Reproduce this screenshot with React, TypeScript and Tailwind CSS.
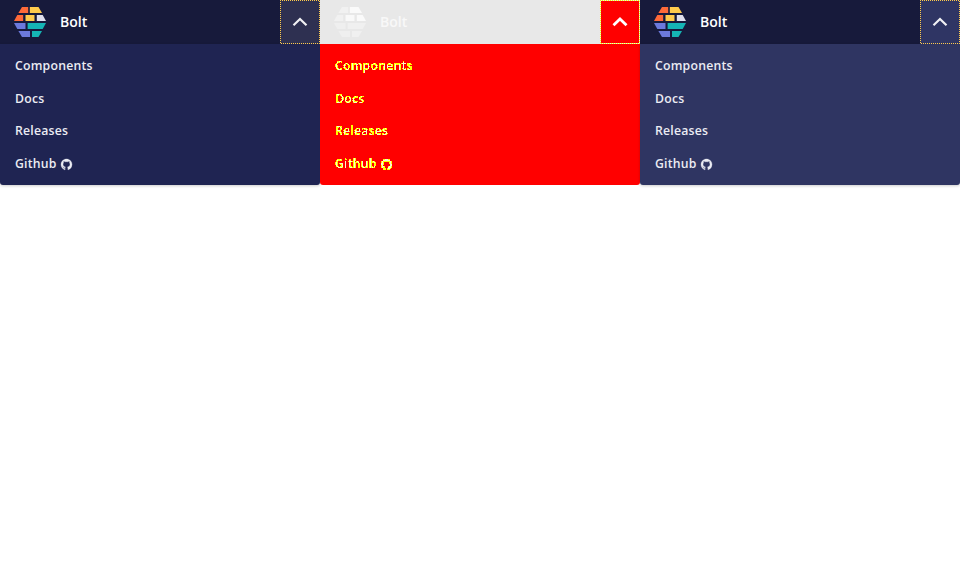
import React from "react";

type Variant = "base" | "diff" | "next";

const font = "font-['Open_Sans',sans-serif]";

function Logo({ faded }: { faded?: boolean }) {
  const c = faded
    ? ["#f1f1f1", "#fafafa", "#f1f1f1", "#f9f9f9", "#fafafa", "#efefef", "#f0f0f0", "#efefef", "#f0f0f0"]
    : ["#ff6a39", "#ffcb4d", "#ff6a39", "#ffcb4d", "#e0e0ee", "#6c79dc", "#15b5b5", "#6c79dc", "#15b5b5"];
  return (
    <svg width="32" height="30" viewBox="0 0 32 30" className="shrink-0">
      <path fill={c[0]} d="M8 0H14.2V6H4.4Z" />
      <path fill={c[1]} d="M15.8 0H24.5L28 6H15.8Z" />
      <path fill={c[2]} d="M3.3 8H9.2V14H0Z" />
      <path fill={c[3]} d="M11.5 8H20.5V14H11.5Z" />
      <path fill={c[4]} d="M22.8 8H28.7L32 14H22.8Z" />
      <path fill={c[5]} d="M0 16H11.5V22H3.3Z" />
      <path fill={c[6]} d="M13.6 16H32L28.7 22H13.6Z" />
      <path fill={c[7]} d="M4.4 24H16V30H8Z" />
      <path fill={c[8]} d="M18 24H28L24.5 30H18Z" />
    </svg>
  );
}

function Github() {
  return (
    <svg width="11" height="11" viewBox="0 0 16 16" fill="currentColor" stroke="currentColor" strokeWidth="0.5" className="shrink-0 overflow-visible">
      <path d="M8 0C3.58 0 0 3.58 0 8c0 3.54 2.29 6.53 5.47 7.59.4.07.55-.17.55-.38 0-.19-.01-.82-.01-1.49-2.01.37-2.53-.49-2.69-.94-.09-.23-.48-.94-.82-1.13-.28-.15-.68-.52-.01-.53.63-.01 1.08.58 1.23.82.72 1.21 1.87.87 2.33.66.07-.52.28-.87.51-1.07-1.78-.2-3.64-.89-3.64-3.95 0-.87.31-1.59.82-2.15-.08-.2-.36-1.02.08-2.12 0 0 .67-.21 2.2.82.64-.18 1.32-.27 2-.27s1.36.09 2 .27c1.53-1.04 2.2-.82 2.2-.82.44 1.1.16 1.92.08 2.12.51.56.82 1.27.82 2.15 0 3.07-1.87 3.75-3.65 3.95.29.25.54.73.54 1.48 0 1.07-.01 1.93-.01 2.2 0 .21.15.46.55.38A8.01 8.01 0 0 0 16 8c0-4.42-3.58-8-8-8Z" />
    </svg>
  );
}

// Marks glyph edges in hard yellow pixels and glyph cores in a pale tint.
function EdgeFilter() {
  return (
    <svg width="0" height="0" className="absolute">
      <filter id="edges" x="-5%" y="-5%" width="110%" height="110%" colorInterpolationFilters="sRGB">
        <feComponentTransfer in="SourceAlpha" result="edgeMask">
          <feFuncA type="discrete" tableValues="0 0 1 1 0 1 1 1 1 1" />
        </feComponentTransfer>
        <feFlood floodColor="#ffff00" />
        <feComposite in2="edgeMask" operator="in" result="edge" />
        <feComponentTransfer in="SourceAlpha" result="coreMask">
          <feFuncA type="discrete" tableValues="0 0 0 0 0 0 0 0 0 1" />
        </feComponentTransfer>
        <feFlood floodColor="#fbf5d0" />
        <feComposite in2="coreMask" operator="in" result="core" />
        <feMerge>
          <feMergeNode in="edge" />
          <feMergeNode in="core" />
        </feMerge>
      </filter>
    </svg>
  );
}

const links = ["Components", "Docs", "Releases", "Github"];

const styles = {
  base: {
    bar: "bg-[#171a3b] text-white",
    button: "bg-[#2e3051]",
    menu: "bg-[#1f2452] text-[#ebecf3] shadow-[0_1px_3px_rgba(0,0,0,0.2)]",
    dot: "#ffcb4d",
    gap: "#2e3051",
  },
  diff: {
    bar: "bg-[#e8e8e8] text-[#f8f8f8]",
    button: "bg-[#ff0000]",
    menu: "bg-[#ff0000] text-[#ffff00]",
    dot: "#ffff00",
    gap: "#e8e8e8",
  },
  next: {
    bar: "bg-[#171a3b] text-white",
    button: "bg-[#2f3564]",
    menu: "bg-[#2f3562] text-[#ebecf3] shadow-[0_1px_3px_rgba(0,0,0,0.2)]",
    dot: "#ffcb4d",
    gap: "#2f3564",
  },
};

function Panel({ variant }: { variant: Variant }) {
  const s = styles[variant];
  const diff = variant === "diff";
  return (
    <section className="w-80">
      <header className={`flex h-11 items-center pl-3.5 ${s.bar}`}>
        <Logo faded={diff} />
        <span className="ml-3.5 flex-1 text-[14px] leading-5 font-semibold">Bolt</span>
        <button className={`flex h-11 w-10 items-center justify-center ${s.button}`}>
          <svg width="40" height="44" viewBox="0 0 40 44" fill="none">
            <path d="M.5 .5H39.5V43.5H.5Z" stroke={s.gap} shapeRendering="crispEdges" />
            <path
              d="M.5 .5H39.5V43.5H.5Z"
              stroke={s.dot}
              strokeDasharray="1 1"
              strokeDashoffset=".5"
              shapeRendering="crispEdges"
            />
            <path d="M13.5 25.3 20 19l6.5 6.3" stroke="#fff" strokeOpacity={diff ? 1 : 0.93} strokeWidth={diff ? 2.8 : 2.2} />
          </svg>
        </button>
      </header>
      <nav
        className={`h-[141px] rounded-b-[3px] pt-[6px] pl-[15px] text-[12.25px] leading-[32.6px] font-semibold tracking-[0.22px] ${s.menu}`}
      >
        {links.map((label) => (
          <a key={label} className={`flex h-[32.6px] w-fit items-center ${diff ? "[filter:url(#edges)]" : ""}`}>
            <span>{label}</span>
            {label === "Github" && (
              <span className="ml-1 pt-px">
                <Github />
              </span>
            )}
          </a>
        ))}
      </nav>
    </section>
  );
}

export default function App() {
  return (
    <main className={`flex h-[568px] w-[960px] overflow-hidden bg-white ${font}`}>
      <EdgeFilter />
      <Panel variant="base" />
      <Panel variant="diff" />
      <Panel variant="next" />
    </main>
  );
}
